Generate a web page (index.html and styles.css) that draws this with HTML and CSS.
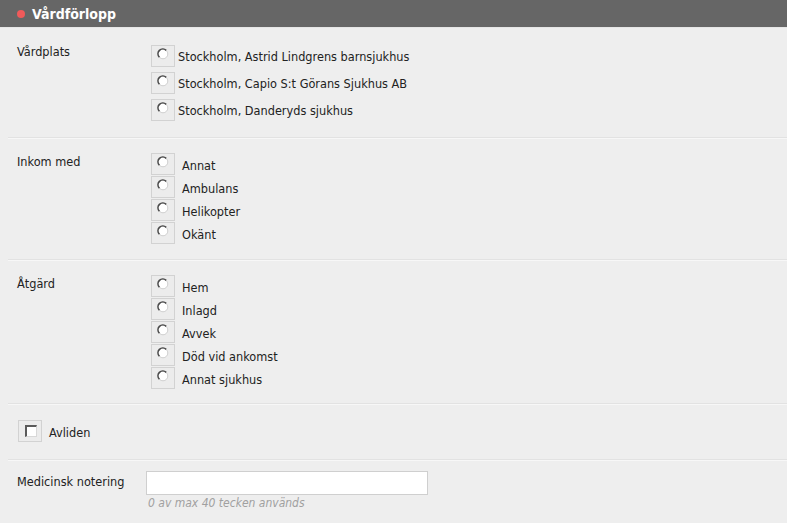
FILE: index.html
```html
<!DOCTYPE html>
<html lang="sv">
<head>
<meta charset="utf-8">
<title>Vårdförlopp</title>
<link rel="stylesheet" href="styles.css">
</head>
<body>
<div class="panel">
  <div class="header"><span class="dot"></span><span class="title">Vårdförlopp</span></div>
  <div class="content">
    <div class="section s1">
      <div class="label">Vårdplats</div>
      <div class="options gap5">
        <div class="opt"><span class="box"><svg width="12" height="12" viewBox="0 0 12 12"><circle cx="6" cy="6" r="4.8" fill="#fff" stroke="#cfcfcf" stroke-width="1"/><path d="M2.4 9.2 A4.8 4.8 0 0 1 9.2 2.4" stroke="#4a4a4a" stroke-width="1.6" fill="none"/></svg></span><span class="otext t1">Stockholm, Astrid Lindgrens barnsjukhus</span></div>
        <div class="opt"><span class="box"><svg width="12" height="12" viewBox="0 0 12 12"><circle cx="6" cy="6" r="4.8" fill="#fff" stroke="#cfcfcf" stroke-width="1"/><path d="M2.4 9.2 A4.8 4.8 0 0 1 9.2 2.4" stroke="#4a4a4a" stroke-width="1.6" fill="none"/></svg></span><span class="otext t1">Stockholm, Capio S:t Görans Sjukhus AB</span></div>
        <div class="opt"><span class="box"><svg width="12" height="12" viewBox="0 0 12 12"><circle cx="6" cy="6" r="4.8" fill="#fff" stroke="#cfcfcf" stroke-width="1"/><path d="M2.4 9.2 A4.8 4.8 0 0 1 9.2 2.4" stroke="#4a4a4a" stroke-width="1.6" fill="none"/></svg></span><span class="otext t1">Stockholm, Danderyds sjukhus</span></div>
      </div>
    </div>
    <div class="section s2">
      <div class="label">Inkom med</div>
      <div class="options gap1">
        <div class="opt"><span class="box"><svg width="12" height="12" viewBox="0 0 12 12"><circle cx="6" cy="6" r="4.8" fill="#fff" stroke="#cfcfcf" stroke-width="1"/><path d="M2.4 9.2 A4.8 4.8 0 0 1 9.2 2.4" stroke="#4a4a4a" stroke-width="1.6" fill="none"/></svg></span><span class="otext">Annat</span></div>
        <div class="opt"><span class="box"><svg width="12" height="12" viewBox="0 0 12 12"><circle cx="6" cy="6" r="4.8" fill="#fff" stroke="#cfcfcf" stroke-width="1"/><path d="M2.4 9.2 A4.8 4.8 0 0 1 9.2 2.4" stroke="#4a4a4a" stroke-width="1.6" fill="none"/></svg></span><span class="otext">Ambulans</span></div>
        <div class="opt"><span class="box"><svg width="12" height="12" viewBox="0 0 12 12"><circle cx="6" cy="6" r="4.8" fill="#fff" stroke="#cfcfcf" stroke-width="1"/><path d="M2.4 9.2 A4.8 4.8 0 0 1 9.2 2.4" stroke="#4a4a4a" stroke-width="1.6" fill="none"/></svg></span><span class="otext">Helikopter</span></div>
        <div class="opt"><span class="box"><svg width="12" height="12" viewBox="0 0 12 12"><circle cx="6" cy="6" r="4.8" fill="#fff" stroke="#cfcfcf" stroke-width="1"/><path d="M2.4 9.2 A4.8 4.8 0 0 1 9.2 2.4" stroke="#4a4a4a" stroke-width="1.6" fill="none"/></svg></span><span class="otext">Okänt</span></div>
      </div>
    </div>
    <div class="section s3">
      <div class="label">Åtgärd</div>
      <div class="options gap1">
        <div class="opt"><span class="box"><svg width="12" height="12" viewBox="0 0 12 12"><circle cx="6" cy="6" r="4.8" fill="#fff" stroke="#cfcfcf" stroke-width="1"/><path d="M2.4 9.2 A4.8 4.8 0 0 1 9.2 2.4" stroke="#4a4a4a" stroke-width="1.6" fill="none"/></svg></span><span class="otext">Hem</span></div>
        <div class="opt"><span class="box"><svg width="12" height="12" viewBox="0 0 12 12"><circle cx="6" cy="6" r="4.8" fill="#fff" stroke="#cfcfcf" stroke-width="1"/><path d="M2.4 9.2 A4.8 4.8 0 0 1 9.2 2.4" stroke="#4a4a4a" stroke-width="1.6" fill="none"/></svg></span><span class="otext">Inlagd</span></div>
        <div class="opt"><span class="box"><svg width="12" height="12" viewBox="0 0 12 12"><circle cx="6" cy="6" r="4.8" fill="#fff" stroke="#cfcfcf" stroke-width="1"/><path d="M2.4 9.2 A4.8 4.8 0 0 1 9.2 2.4" stroke="#4a4a4a" stroke-width="1.6" fill="none"/></svg></span><span class="otext">Avvek</span></div>
        <div class="opt"><span class="box"><svg width="12" height="12" viewBox="0 0 12 12"><circle cx="6" cy="6" r="4.8" fill="#fff" stroke="#cfcfcf" stroke-width="1"/><path d="M2.4 9.2 A4.8 4.8 0 0 1 9.2 2.4" stroke="#4a4a4a" stroke-width="1.6" fill="none"/></svg></span><span class="otext">Död vid ankomst</span></div>
        <div class="opt"><span class="box"><svg width="12" height="12" viewBox="0 0 12 12"><circle cx="6" cy="6" r="4.8" fill="#fff" stroke="#cfcfcf" stroke-width="1"/><path d="M2.4 9.2 A4.8 4.8 0 0 1 9.2 2.4" stroke="#4a4a4a" stroke-width="1.6" fill="none"/></svg></span><span class="otext">Annat sjukhus</span></div>
      </div>
    </div>
    <div class="section s4">
      <div class="opt"><span class="box cbox"><span class="check"></span></span><span class="ctext">Avliden</span></div>
    </div>
    <div class="section s5">
      <div class="label">Medicinsk notering</div>
      <div class="field">
        <div class="input"></div>
        <div class="hint">0 av max 40 tecken används</div>
      </div>
    </div>
  </div>
</div>
</body>
</html>
```
FILE: styles.css
```css
html, body {
  margin: 0;
  padding: 0;
  background: #eeeeee;
}
body {
  font-family: "DejaVu Sans Condensed", "Liberation Sans", sans-serif;
  font-size: 12.6px;
  color: #222;
  width: 787px;
  height: 523px;
  overflow: hidden;
}
.header {
  height: 27px;
  background: #666666;
  display: flex;
  align-items: center;
  padding-left: 17px;
  border-bottom: 1px solid #e6e6e6;
}
.dot {
  width: 8px;
  height: 8px;
  border-radius: 50%;
  background: #f05a5a;
  margin-right: 7px;
}
.title {
  color: #fff;
  font-weight: bold;
  font-size: 14px;
}
.content {
  padding-left: 8px;
}
.section {
  display: flex;
  border-bottom: 1px solid #e2e2e2;
  box-shadow: 0 1px 0 #f7f7f7;
  padding-left: 9px;
}
.s1 { padding-top: 17px; padding-bottom: 16px; }
.s2 { padding-top: 15px; padding-bottom: 15px; }
.s3 { padding-top: 15px; padding-bottom: 14px; }
.s4 { padding-top: 16px; padding-bottom: 17px; padding-left: 10px; }
.s5 { padding-top: 11px; border-bottom: none; box-shadow: none; }
.label {
  width: 134px;
  flex: none;
  line-height: 14px;
}
.s2 .label, .s3 .label { padding-top: 2px; }
.s5 .label { width: 129px; padding-top: 4px; }
.options {
  display: flex;
  flex-direction: column;
}
.gap5 { gap: 5px; }
.gap1 { gap: 1px; }
.opt {
  display: flex;
  align-items: flex-start;
  height: 22px;
}
.box {
  width: 22px;
  border: 1px solid #d2d2d2;
  background: #ececec;
  display: flex;
  justify-content: center;
  padding-top: 2px;
  height: 18px;
}
.box svg { display: block; }
.otext {
  margin-left: 7px;
  padding-top: 6px;
  line-height: 14px;
}
.otext.t1 { margin-left: 3px; padding-top: 5px; }
.cbox {
  justify-content: flex-start;
  padding-left: 6px;
  width: 16px;
  padding-top: 4px;
  height: 16px;
}
.check {
  width: 9px;
  height: 9px;
  background: #fff;
  border-top: 2px solid #5a5a5a;
  border-left: 2px solid #5a5a5a;
  border-right: 1px solid #d8d8d8;
  border-bottom: 1px solid #d8d8d8;
}
.ctext {
  margin-left: 7px;
  padding-top: 6px;
  line-height: 14px;
}
.field {
  display: flex;
  flex-direction: column;
}
.input {
  width: 280px;
  height: 22px;
  background: #fff;
  border: 1px solid #cfcfcf;
}
.hint {
  color: #a0a0a0;
  font-style: italic;
  font-size: 12px;
  line-height: 14px;
  margin-left: 2px;
  margin-top: 1px;
}
```
